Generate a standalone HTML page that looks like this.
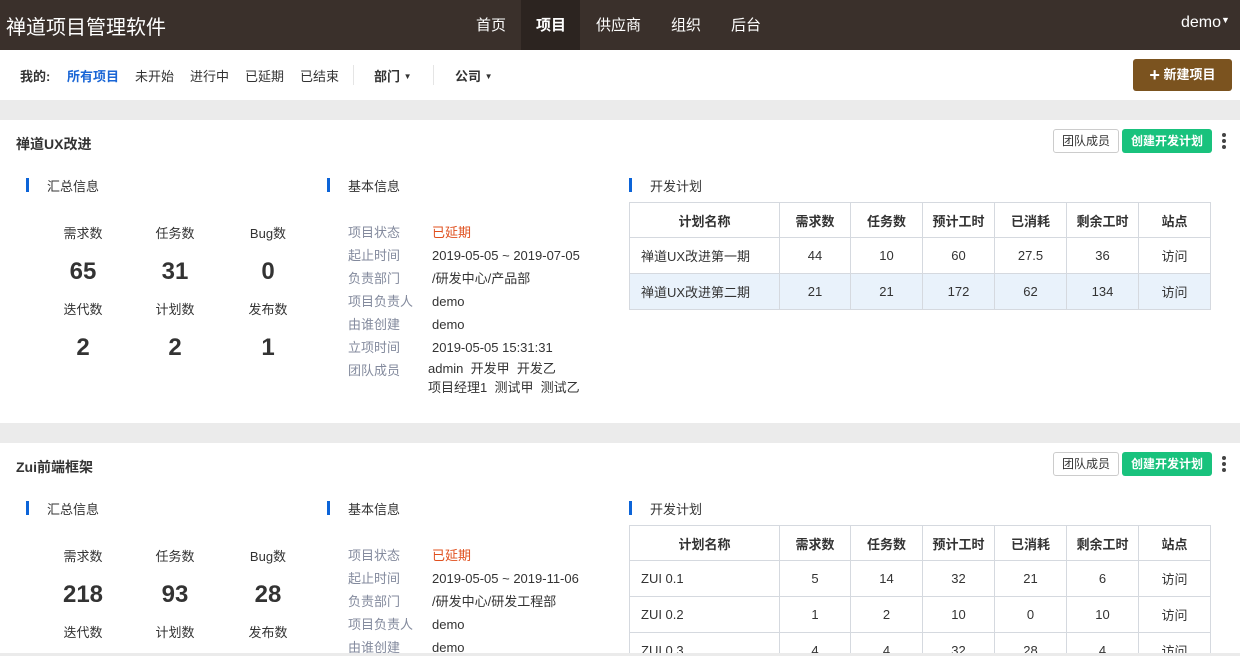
<!DOCTYPE html>
<html><head><meta charset="utf-8"><style>
*{margin:0;padding:0;box-sizing:border-box}
html,body{width:1240px;height:656px;overflow:hidden}
body{background:#ebebeb;font-family:"Liberation Sans","Noto Sans CJK SC",sans-serif;font-size:13px;color:#333;position:relative}
.a{position:absolute;white-space:nowrap}
#top{position:absolute;left:0;top:0;width:1240px;height:50px;background:#3a302b;color:#fff}
#sub{position:absolute;left:0;top:50px;width:1240px;height:50px;background:#fff}
.card{position:absolute;left:0;width:1240px;height:303px;background:#fff;overflow:hidden}
.bar{position:absolute;width:3px;height:14px;background:#0c64d8}
.lbl{color:#838a9d}
table{position:absolute;border-collapse:collapse;font-size:13px}
td,th{border:1px solid #d5d9df;text-align:center;height:36px;color:#333}
th{font-weight:bold;height:35px}
td:first-child{text-align:left;padding-left:11px}
.big{font-size:24px;font-weight:bold;color:#333;width:60px;text-align:center}
.sm{width:60px;text-align:center;font-size:13px}
.btn1{position:absolute;height:24px;border:1px solid #ccc;border-radius:3px;font-size:12px;line-height:22px;padding:0 8px;color:#333;background:#fff}
.btn2{position:absolute;height:24px;border-radius:3px;font-size:12px;line-height:24px;padding:0 9px;color:#fff;background:#19c27d;font-weight:bold}
.dots{position:absolute;width:4px}
.dots i{display:block;width:4px;height:4px;border-radius:2px;background:#444;margin-bottom:2px}
</style></head><body>
<div id="top">
<div class="a" style="left:6px;top:11px;font-size:20px">禅道项目管理软件</div>
<div class="a" style="left:521px;top:0;width:59px;height:50px;background:#2c2420"></div>
<div class="a" style="left:476px;top:14px;font-size:15px">首页</div>
<div class="a" style="left:536px;top:14px;font-size:15px;font-weight:bold">项目</div>
<div class="a" style="left:596px;top:14px;font-size:15px">供应商</div>
<div class="a" style="left:671px;top:14px;font-size:15px">组织</div>
<div class="a" style="left:731px;top:14px;font-size:15px">后台</div>
<div class="a" style="left:1181px;top:14px;font-size:16px">demo<span style="font-size:9px;vertical-align:4px">▼</span></div>
</div>
<div id="sub">
<div class="a" style="left:20px;top:16px;font-weight:bold">我的:</div>
<div class="a" style="left:67px;top:16px;font-weight:bold;color:#1a66d6">所有项目</div>
<div class="a" style="left:135px;top:16px">未开始</div>
<div class="a" style="left:190px;top:16px">进行中</div>
<div class="a" style="left:245px;top:16px">已延期</div>
<div class="a" style="left:300px;top:16px">已结束</div>
<div class="a" style="left:353px;top:15px;width:1px;height:20px;background:#e5e5e5"></div>
<div class="a" style="left:374px;top:16px;font-weight:bold">部门 <span style="font-size:8px;vertical-align:2px">▼</span></div>
<div class="a" style="left:433px;top:15px;width:1px;height:20px;background:#e5e5e5"></div>
<div class="a" style="left:455px;top:16px;font-weight:bold">公司 <span style="font-size:8px;vertical-align:2px">▼</span></div>
<div class="a" style="left:1133px;top:9px;width:99px;height:32px;background:#7b531f;border-radius:3px;color:#fff;font-weight:bold;line-height:32px;text-align:center"><span style="font-size:18px;vertical-align:-2px">+</span> 新建项目</div>
</div>

<div class="card" style="top:120px">
<div class="a" style="left:16px;top:14px;font-size:14px;font-weight:bold">禅道UX改进</div>
<div class="btn1" style="left:1053px;top:9px">团队成员</div>
<div class="btn2" style="left:1122px;top:9px">创建开发计划</div>
<div class="dots" style="left:1222px;top:13px"><i></i><i></i><i></i></div>
<div class="bar" style="left:26px;top:58px"></div><div class="a" style="left:47px;top:56px">汇总信息</div>
<div class="bar" style="left:327px;top:58px"></div><div class="a" style="left:348px;top:56px">基本信息</div>
<div class="bar" style="left:629px;top:58px"></div><div class="a" style="left:650px;top:56px">开发计划</div>
<div class="a sm" style="left:53px;top:103px">需求数</div><div class="a sm" style="left:145px;top:103px">任务数</div><div class="a sm" style="left:238px;top:103px">Bug数</div>
<div class="a big" style="left:53px;top:138px">65</div><div class="a big" style="left:145px;top:138px">31</div><div class="a big" style="left:238px;top:138px">0</div>
<div class="a sm" style="left:53px;top:179px">迭代数</div><div class="a sm" style="left:145px;top:179px">计划数</div><div class="a sm" style="left:238px;top:179px">发布数</div>
<div class="a big" style="left:53px;top:214px">2</div><div class="a big" style="left:145px;top:214px">2</div><div class="a big" style="left:238px;top:214px">1</div>
<div class="a lbl" style="left:348px;top:101px;line-height:23px">项目状态<br>起止时间<br>负责部门<br>项目负责人<br>由谁创建<br>立项时间<br>团队成员</div>
<div class="a" style="left:432px;top:101px;line-height:23px"><span style="color:#e0501e">已延期</span><br>2019-05-05 ~ 2019-07-05<br>/研发中心/产品部<br>demo<br>demo<br>2019-05-05 15:31:31</div>
<div class="a" style="left:428px;top:239px;line-height:19px">admin&nbsp; 开发甲&nbsp; 开发乙<br>项目经理1&nbsp; 测试甲&nbsp; 测试乙</div>
<table style="left:629px;top:82px;width:582px">
<tr><th style="width:150px">计划名称</th><th style="width:71px">需求数</th><th style="width:72px">任务数</th><th style="width:72px">预计工时</th><th style="width:72px">已消耗</th><th style="width:72px">剩余工时</th><th>站点</th></tr>
<tr><td>禅道UX改进第一期</td><td>44</td><td>10</td><td>60</td><td>27.5</td><td>36</td><td>访问</td></tr>
<tr style="background:#e9f2fb"><td>禅道UX改进第二期</td><td>21</td><td>21</td><td>172</td><td>62</td><td>134</td><td>访问</td></tr>
</table>
</div>

<div class="card" style="top:443px;height:213px">
<div class="a" style="left:16px;top:14px;font-size:14px;font-weight:bold">Zui前端框架</div>
<div class="btn1" style="left:1053px;top:9px">团队成员</div>
<div class="btn2" style="left:1122px;top:9px">创建开发计划</div>
<div class="dots" style="left:1222px;top:13px"><i></i><i></i><i></i></div>
<div class="bar" style="left:26px;top:58px"></div><div class="a" style="left:47px;top:56px">汇总信息</div>
<div class="bar" style="left:327px;top:58px"></div><div class="a" style="left:348px;top:56px">基本信息</div>
<div class="bar" style="left:629px;top:58px"></div><div class="a" style="left:650px;top:56px">开发计划</div>
<div class="a sm" style="left:53px;top:103px">需求数</div><div class="a sm" style="left:145px;top:103px">任务数</div><div class="a sm" style="left:238px;top:103px">Bug数</div>
<div class="a big" style="left:53px;top:138px">218</div><div class="a big" style="left:145px;top:138px">93</div><div class="a big" style="left:238px;top:138px">28</div>
<div class="a sm" style="left:53px;top:179px">迭代数</div><div class="a sm" style="left:145px;top:179px">计划数</div><div class="a sm" style="left:238px;top:179px">发布数</div>
<div class="a lbl" style="left:348px;top:101px;line-height:23px">项目状态<br>起止时间<br>负责部门<br>项目负责人<br>由谁创建</div>
<div class="a" style="left:432px;top:101px;line-height:23px"><span style="color:#e0501e">已延期</span><br>2019-05-05 ~ 2019-11-06<br>/研发中心/研发工程部<br>demo<br>demo</div>
<table style="left:629px;top:82px;width:582px">
<tr><th style="width:150px">计划名称</th><th style="width:71px">需求数</th><th style="width:72px">任务数</th><th style="width:72px">预计工时</th><th style="width:72px">已消耗</th><th style="width:72px">剩余工时</th><th>站点</th></tr>
<tr><td>ZUI 0.1</td><td>5</td><td>14</td><td>32</td><td>21</td><td>6</td><td>访问</td></tr>
<tr><td>ZUI 0.2</td><td>1</td><td>2</td><td>10</td><td>0</td><td>10</td><td>访问</td></tr>
<tr><td>ZUI 0.3</td><td>4</td><td>4</td><td>32</td><td>28</td><td>4</td><td>访问</td></tr>
</table>
</div>
<div class="a" style="left:0;top:653px;width:1240px;height:3px;background:#ebebeb"></div>
</body></html>
